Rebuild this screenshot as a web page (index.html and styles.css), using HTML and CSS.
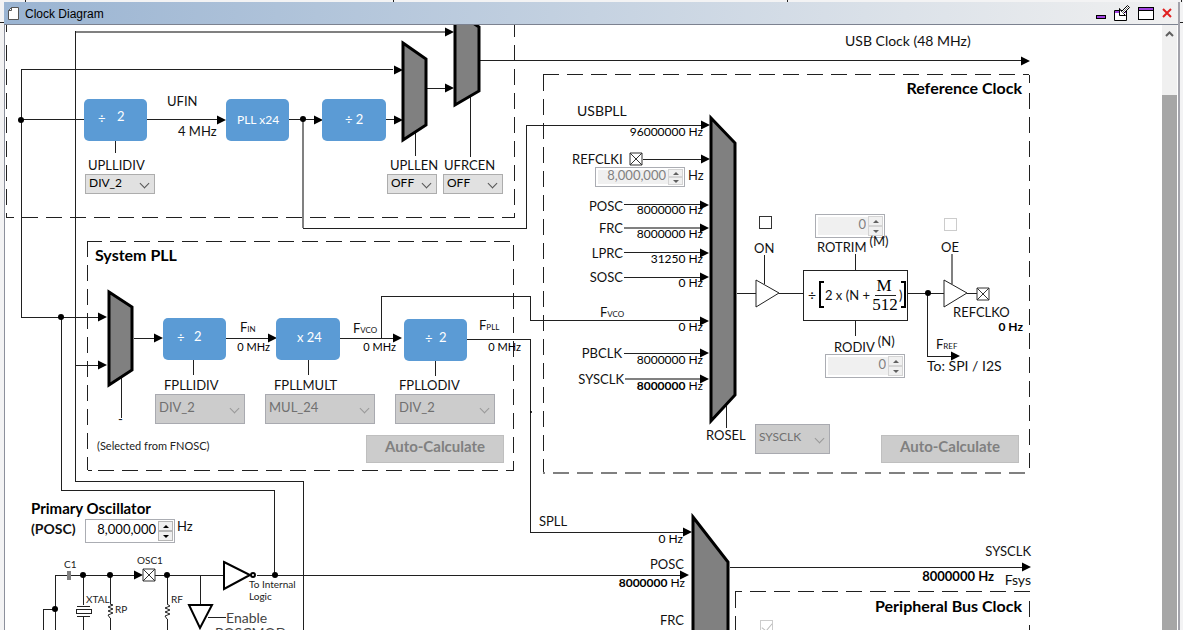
FILE: index.html
```html
<!DOCTYPE html>
<html lang="en">
<head>
    <meta charset="UTF-8">
    <meta name="viewport" content="width=device-width, initial-scale=1.0">
    <title>Clock Diagram</title>
    <link rel="stylesheet" href="styles.css">
</head>
<body>
    <div class="window">
        <header class="titlebar">
            <svg class="doc-icon" width="11" height="13" viewBox="0 0 11 13">
                <path d="M3.500 .5H10.500V12.500H.5V3.500Z" fill="#fff" stroke="#555"/>
                <path d="M3.500 .5V3.500H.5" fill="none" stroke="#555"/>
            </svg>
            <span class="title">Clock Diagram</span>
            <div class="window-buttons">
                <button class="win-btn" aria-label="Minimize">
                    <svg width="10" height="18" viewBox="0 0 10 18"><rect x=".5" y="11.500" width="9" height="3" fill="#a040e0" stroke="#000"/></svg>
                </button>
                <button class="win-btn" aria-label="Float">
                    <svg width="16" height="18" viewBox="0 0 16 18">
                        <path d="M.5 6.500H12.500V16.500H.5Z" fill="#fff" stroke="#000"/>
                        <path d="M1 7H12V9H1Z" fill="#a040e0"/>
                        <path d="M5.500 4.500L7.500 7.500L13.500 1.500L15.500 3.500L9.500 9.500L11.500 11.500H5.500Z" fill="#fff" stroke="#000"/>
                        <path d="M8 9L14 3" stroke="#777"/>
                    </svg>
                </button>
                <button class="win-btn" aria-label="Maximize">
                    <svg width="16" height="18" viewBox="0 0 16 18"><rect x=".5" y="3.500" width="15" height="12" fill="#fff" stroke="#000"/><path d="M1 4H15V6H1Z" fill="#a040e0"/><path d="M1 6.500H15" stroke="#000"/></svg>
                </button>
                <button class="win-btn" aria-label="Close">
                    <svg width="10" height="18" viewBox="0 0 10 18"><path d="M1 5L9 13M9 5L1 13" stroke="#e02020" stroke-width="2"/></svg>
                </button>
            </div>
        </header>

        <main class="content">
            <div class="canvas">
                <svg class="diagram" width="1157" height="605" viewBox="5 25 1157 605">
                    <defs>
                        <marker id="arrow" markerUnits="userSpaceOnUse" markerWidth="10" markerHeight="10" refX="9" refY="5" orient="auto">
                            <path d="M0 0.500L9 5L0 9.500Z"/>
                        </marker>
                    </defs>

                    <!-- group frames -->
                    <g class="frame">
                        <path d="M6 25V32M6 45V217" stroke-dasharray="16 8"/>
                        <path d="M6 217H14M22 217H515" stroke-dasharray="16 8"/>
                        <path d="M514 21V217" stroke-dasharray="16 8"/>
                        <path d="M88 241H102M110 241H514" stroke-dasharray="16 8"/>
                        <path d="M87 241V470" stroke-dasharray="16 8"/>
                        <path d="M513 245V470" stroke-dasharray="16 8"/>
                        <path d="M88 470H92M98 470H514" stroke-dasharray="16 8"/>
                        <path d="M543 74H1029" stroke-dasharray="16 8"/>
                        <path d="M543 75V472" stroke-dasharray="16 8"/>
                        <path d="M1029 75V83M1029 93V468" stroke-dasharray="16 8"/>
                        <path class="soft" d="M543 473H545M553 473H1028" stroke-dasharray="16 8"/>
                        <path d="M735 591H742M750 591H1030" stroke-dasharray="16 8"/>
                        <path d="M735 592V630" stroke-dasharray="16 8"/>
                        <path d="M1029 601V630" stroke-dasharray="16 8"/>
                    </g>

                    <!-- wires -->
                    <g class="wire">
                        <path class="soft" d="M76 32H446"/>
                        <path d="M75 31V481H303V630"/>
                        <path d="M21 317V69H393"/>
                        <path d="M21 119H84M147 119H218M289 119H316M386 119H396"/>
                        <path d="M115 141V153M415 133V156M470 97V157"/>
                        <path d="M427 88H446M480 60H1022"/>
                        <path class="soft" d="M303 120V228"/>
                        <path d="M303 228H526V125H702M643 159H702"/>
                        <path d="M624 204H702M624 252H702M624 277H702M624 353H702"/>
                        <path class="soft" d="M624 228H702M625 379H702"/>
                        <path d="M381 338V296H530V320H702"/>
                        <path d="M21 317H98M75 365H98"/>
                        <path d="M61 317V490H274V575"/>
                        <path d="M121 377V418M193 360V375M308 359V375M435 361V376"/>
                        <path d="M134 338H154M226 338H268M340 338H395"/>
                        <path d="M467 339H530V532H684"/>
                        <path d="M726 406V428M737 293H756M779 293H804M907 293H944M967 293H977"/>
                        <path d="M764 255V284M855 254V271M855 320V336"/>
                        <path class="soft" d="M952 254V284"/>
                        <path d="M927 293V356H952"/>
                        <path d="M257 575H682M730 567H1022"/>
                        <path d="M43 630V609H55M55 630V575H67M71 575H135M155 575H224"/>
                        <path d="M83 575V605M83 617V630M110 575V604M110 618V630M167 575V604M167 619V630M200 575V605M208 617H226"/>
                    </g>
                    <g class="heads">
                        <path d="M440 32H454"/><path d="M390 70H403"/><path d="M390 120H403"/><path d="M210 120H226"/>
                        <path d="M312 120H323"/><path d="M440 88H454"/><path d="M1010 61H1030"/>
                        <path d="M700 125H710"/><path d="M700 159H710"/><path d="M698 205H709"/><path d="M698 228H709"/>
                        <path d="M698 253H709"/><path d="M698 277H709"/><path d="M698 321H709"/><path d="M698 353H709"/><path d="M698 379H709"/>
                        <path d="M96 317H107"/><path d="M96 365H107"/><path d="M150 338H163"/><path d="M266 338H277"/><path d="M390 338H402"/>
                        <path d="M680 532H692"/><path d="M948 356H960"/><path d="M678 575H689"/><path d="M1010 567H1031"/><path d="M130 575H143"/>
                    </g>

                    <g class="dots">
                        <circle cx="21" cy="120" r="3"/><circle cx="303" cy="119" r="3"/><circle cx="61" cy="317" r="3"/>
                        <circle cx="928" cy="293" r="3"/><circle cx="275" cy="575" r="3"/><circle cx="83" cy="575" r="3"/>
                        <circle cx="110" cy="575" r="3"/><circle cx="167" cy="575" r="3"/><circle cx="55" cy="609" r="3"/>
                        <circle cx="531" cy="412" r="1"/>
                    </g>

                    <!-- multiplexers -->
                    <g class="mux">
                        <path d="M403 43L426 59V125L403 140Z"/>
                        <path d="M455 11L479 27V91L455 105Z"/>
                        <path d="M109 292L132 307V370L109 385Z"/>
                        <path d="M711 118L735 143V395L711 421Z"/>
                        <path d="M693 517L728 562V640H693Z"/>
                    </g>

                    <!-- dividers and multipliers -->
                    <g class="block">
                        <rect x="84" y="99" width="63" height="42" rx="5"/>
                        <rect x="226" y="99" width="63" height="42" rx="5"/>
                        <rect x="322" y="99" width="64" height="42" rx="5"/>
                        <rect x="163" y="318" width="63" height="42" rx="5"/>
                        <rect x="276" y="318" width="64" height="42" rx="5"/>
                        <rect x="404" y="319" width="63" height="42" rx="5"/>
                    </g>
                    <g class="block-text">
                        <text x="98" y="123">÷</text><text x="117" y="121">2</text>
                        <text x="237" y="124" class="small">PLL x24</text>
                        <text x="345" y="124">÷ 2</text>
                        <text x="177" y="342">÷</text><text x="194" y="341">2</text>
                        <text x="297" y="342">x 24</text>
                        <text x="425" y="343">÷</text><text x="439" y="342">2</text>
                    </g>

                    <!-- buffers, pads and the divider formula -->
                    <g class="part">
                        <path d="M756 280L779 293L756 307Z"/>
                        <path d="M944 280L967 293L944 307Z"/>
                        <path class="pad" d="M630 153H642V165H630ZL642 165M642 153L630 165"/>
                        <path class="pad" d="M977 288H989V300H977ZL989 300M989 288L977 300"/>
                        <path class="pad" d="M143 569H155V581H143ZL155 581M155 569L143 581"/>
                        <rect x="803" y="270" width="104" height="50" class="crisp"/>
                        <path class="bracket" d="M824 282H820V307H824M901 282H905V307H901"/>
                        <path class="crisp" d="M875 295H896"/>
                    </g>
                    <text x="808" y="300" class="label large">÷</text>
                    <text x="825" y="300" class="label">2 x (N +</text>
                    <text x="884" y="291" class="math">M</text>
                    <text x="885" y="310" class="math">512</text>
                    <text x="899" y="300" class="label">)</text>

                    <!-- oscillator parts -->
                    <g class="part">
                        <path class="cap" d="M68 571V580M70 571V580"/>
                        <path class="bold" d="M224 562L250 575L224 589Z"/>
                        <circle class="bold" cx="253" cy="575" r="2"/>
                        <path class="bold" d="M189 605H212L200 628Z"/>
                        <path class="crisp" d="M77 606H90M77 616H90M76 609H91V613H76Z"/>
                        <path d="M110 604L113 605L108 607L113 609L108 611L113 613L108 615L110 618"/>
                        <path d="M167 604L170 606L165 608L170 610L165 612L170 614L165 616L167 619"/>
                    </g>

                    <g class="label">
                        <text x="845" y="46" class="large">USB Clock (48 MHz)</text>
                        <text x="167" y="106">UFIN</text>
                        <text x="178" y="136">4 MHz</text>
                        <text x="577" y="116" class="large">USBPLL</text>
                        <text x="688" y="180">Hz</text>
                        <text x="927" y="371" class="large">To: SPI / I2S</text>
                        <text x="953" y="317">REFCLKO</text>
                        <text x="539" y="526">SPLL</text>
                        <text x="177" y="531">Hz</text>
                        <text x="118" y="424">-</text>
                        <text x="226" y="623" class="enable">Enable</text>
                        <text x="215" y="638" class="enable">POSCMOD</text>
                        <text x="600" y="317">F<tspan class="sub">VCO</tspan></text>
                        <text x="240" y="332">F<tspan class="sub">IN</tspan></text>
                        <text x="353" y="333">F<tspan class="sub">VCO</tspan></text>
                        <text x="479" y="330">F<tspan class="sub">PLL</tspan></text>
                        <text x="936" y="349">F<tspan class="sub">REF</tspan></text>
                    </g>
                    <g class="label end">
                        <text x="623" y="211">POSC</text>
                        <text x="623" y="233">FRC</text>
                        <text x="623" y="258">LPRC</text>
                        <text x="623" y="282">SOSC</text>
                        <text x="622" y="358">PBCLK</text>
                        <text x="624" y="384">SYSCLK</text>
                        <text x="684" y="569">POSC</text>
                        <text x="684" y="625">FRC</text>
                        <text x="1031" y="556">SYSCLK</text>
                        <text x="1031" y="585" class="large">Fsys</text>
                    </g>
                    <g class="value end">
                        <text x="703" y="136">96000000 Hz</text>
                        <text x="703" y="214">8000000 Hz</text>
                        <text x="703" y="238">8000000 Hz</text>
                        <text x="703" y="263">31250 Hz</text>
                        <text x="703" y="287">0 Hz</text>
                        <text x="703" y="331">0 Hz</text>
                        <text x="703" y="364">8000000 Hz</text>
                        <text x="703" y="390"><tspan class="strong">8000000</tspan> Hz</text>
                        <text x="683" y="543">0 Hz</text>
                        <text x="685" y="587"><tspan class="strong">8000000</tspan> Hz</text>
                        <text x="994" y="581" class="strong total">8000000 Hz</text>
                        <text x="1023" y="331" class="strong">0 Hz</text>
                        <text x="270" y="351" class="mhz">0 MHz</text>
                        <text x="396" y="351" class="mhz">0 MHz</text>
                        <text x="521" y="351" class="mhz">0 MHz</text>
                    </g>
                    <g class="heading">
                        <text x="1022" y="94" class="end">Reference Clock</text>
                        <text x="1022" y="612" class="end">Peripheral Bus Clock</text>
                        <text x="95" y="261">System PLL</text>
                        <text x="31" y="514" class="osc">Primary Oscillator</text>
                    </g>
                    <g class="tiny">
                        <text x="64" y="568">C1</text>
                        <text x="137" y="564">OSC1</text>
                        <text x="86" y="603">XTAL</text>
                        <text x="115" y="613">RP</text>
                        <text x="171" y="603">RF</text>
                        <text x="249" y="588">To Internal</text>
                        <text x="249" y="600">Logic</text>
                        <text x="97" y="450" class="note">(Selected from FNOSC)</text>
                    </g>
                </svg>

                <!-- USB PLL -->
                <div class="field upllidiv">
                    <label for="upllidiv">UPLLIDIV</label>
                    <span class="select"><select id="upllidiv"><option>DIV_2</option></select></span>
                </div>
                <div class="field upllen">
                    <label for="upllen">UPLLEN</label>
                    <span class="select"><select id="upllen"><option>OFF</option></select></span>
                </div>
                <div class="field ufrcen">
                    <label for="ufrcen">UFRCEN</label>
                    <span class="select"><select id="ufrcen"><option>OFF</option></select></span>
                </div>

                <!-- System PLL -->
                <div class="field tall fpllidiv">
                    <label for="fpllidiv">FPLLIDIV</label>
                    <span class="select"><select id="fpllidiv" disabled><option>DIV_2</option></select></span>
                </div>
                <div class="field tall fpllmult">
                    <label for="fpllmult">FPLLMULT</label>
                    <span class="select"><select id="fpllmult" disabled><option>MUL_24</option></select></span>
                </div>
                <div class="field tall fpllodiv">
                    <label for="fpllodiv">FPLLODIV</label>
                    <span class="select"><select id="fpllodiv" disabled><option>DIV_2</option></select></span>
                </div>
                <button class="calc calc-pll" disabled>Auto-Calculate</button>

                <!-- Reference clock -->
                <label class="node refclki-label" for="refclki">REFCLKI</label>
                <span class="spinner off refclki">
                    <input id="refclki" type="text" value="8,000,000" disabled>
                    <span class="steps"><button aria-label="Increase" disabled></button><button aria-label="Decrease" disabled></button></span>
                </span>
                <input class="node check on" id="on" type="checkbox">
                <label class="node on-label" for="on">ON</label>
                <input class="node check oe" id="oe" type="checkbox" disabled>
                <label class="node oe-label" for="oe">OE</label>
                <span class="spinner off rotrim">
                    <input id="rotrim" type="text" value="0" disabled>
                    <span class="steps"><button aria-label="Increase" disabled></button><button aria-label="Decrease" disabled></button></span>
                </span>
                <label class="node rotrim-label" for="rotrim">ROTRIM<sup>(M)</sup></label>
                <label class="node rodiv-label" for="rodiv">RODIV<sup>(N)</sup></label>
                <span class="spinner off rodiv">
                    <input id="rodiv" type="text" value="0" disabled>
                    <span class="steps"><button aria-label="Increase" disabled></button><button aria-label="Decrease" disabled></button></span>
                </span>
                <label class="node rosel-label" for="rosel">ROSEL</label>
                <div class="field tall rosel">
                    <span class="select"><select id="rosel" disabled><option>SYSCLK</option></select></span>
                </div>
                <button class="calc calc-ref" disabled>Auto-Calculate</button>

                <!-- Primary oscillator -->
                <label class="node posc-label" for="posc">(POSC)</label>
                <span class="spinner posc">
                    <input id="posc" type="text" value="8,000,000">
                    <span class="steps"><button aria-label="Increase"></button><button aria-label="Decrease"></button></span>
                </span>

                <!-- Peripheral bus clock -->
                <input class="node check pbclk" type="checkbox" aria-label="Peripheral bus clock" checked disabled>
            </div>

            <div class="scrollbar">
                <svg width="15" height="20" viewBox="0 0 15 20"><path d="M4 11L7.500 7.500L11 11" fill="none" stroke="#606060" stroke-width="2"/></svg>
                <div class="thumb"></div>
            </div>
        </main>
    </div>
</body>
</html>
```

FILE: styles.css
```css
* {
    box-sizing: border-box;
}
/* grid lines of the desktop show around the window */
body {
    margin: 0;
    padding: 2px 3px 0 4px;
    height: 100vh;
    display: flex;
    background:
        linear-gradient(#222, #222) 0 22px / 100% 1px no-repeat,
        repeating-linear-gradient(90deg, transparent 0 393px, #222 393px 394px) 0 0 / 100% 2px no-repeat,
        linear-gradient(#222, #222) 25px 0 / 1px 2px no-repeat,
        #f3f3f4;
    font-family: Lato, "Liberation Sans", sans-serif;
    font-size: 13px;
    color: #111;
    overflow: hidden;
}
.window {
    flex: 1;
    min-width: 0;
    display: flex;
    flex-direction: column;
    border-right: 2px solid #a3a3ab;
}
.titlebar {
    flex: none;
    height: 23px;
    display: flex;
    align-items: center;
    padding: 0 6px 0 4px;
    background: linear-gradient(90deg, #9ab4d2, #f0f0f0);
    border-bottom: 1px solid #7c8290;
}
.title {
    margin-left: 6px;
    padding-top: 1px;
    font-family: "Liberation Sans", sans-serif;
    font-size: 12px;
    color: #000;
}
.window-buttons {
    margin-left: auto;
    display: flex;
    gap: 8px;
}
.win-btn {
    padding: 0;
    border: none;
    background: none;
    display: flex;
}
.content {
    flex: 1;
    min-height: 0;
    display: flex;
    background: #fff;
    border-left: 1px solid #8c909c;
    padding-right: 1px;
}
.canvas {
    flex: 1;
    position: relative;
    overflow: hidden;
}
.diagram {
    display: block;
}
.scrollbar {
    flex: none;
    width: 15px;
    display: flex;
    flex-direction: column;
    background: #f0f0f0;
}
.thumb {
    flex: 1;
    margin-top: 50px;
    background: #a6a6a6;
}

/* drawing */
.frame path,
.wire path {
    fill: none;
    stroke: #202020;
    shape-rendering: crispEdges;
}
.frame .soft,
.wire .soft {
    stroke: #808080;
    stroke-width: 2;
}
.heads path {
    fill: none;
    stroke: none;
    marker-end: url(#arrow);
}
.mux path {
    fill: #808080;
    stroke: #000;
    stroke-width: 3;
}
.block {
    fill: #5b9bd5;
}
.block-text {
    fill: #fff;
    font-size: 13px;
}
.block-text .small {
    font-size: 12px;
}
.part {
    fill: #fff;
    stroke: #222;
}
.part .crisp {
    shape-rendering: crispEdges;
}
.part .pad {
    stroke: #333;
}
.part .bracket {
    fill: none;
    stroke: #000;
    stroke-width: 2;
}
.part .bold {
    stroke: #000;
    stroke-width: 2;
}
.part .cap {
    stroke: #808080;
    stroke-width: 2;
}
.label {
    font-size: 13px;
    fill: #111;
}
.large {
    font-size: 14px;
}
.label .sub {
    font-size: 8px;
}
.label .enable {
    font-size: 14px;
    fill: #444;
}
.value {
    font-size: 12px;
    fill: #000;
}
.value .mhz {
    font-size: 11px;
}
.value .total {
    font-size: 13px;
}
.strong {
    font-weight: bold;
}
.end {
    text-anchor: end;
}
.heading {
    font-size: 16px;
    font-weight: bold;
    fill: #000;
}
.heading .osc {
    font-size: 15px;
}
.math {
    font-family: "Liberation Serif", serif;
    font-size: 17px;
    text-anchor: middle;
}
.tiny {
    font-size: 10px;
    fill: #222;
}
.tiny .note {
    font-size: 11px;
}

/* controls placed on the drawing */
.node,
.field,
.spinner,
.calc {
    position: absolute;
    margin: 0;
}
label {
    line-height: 16px;
    white-space: nowrap;
}
label sup {
    margin-left: 3px;
    font-size: 13px;
    line-height: 0;
    vertical-align: 6px;
}
.field {
    display: flex;
    flex-direction: column;
    gap: 1px;
}
.field label {
    padding-left: 3px;
}
.tall label {
    padding-left: 9px;
}
.select {
    position: relative;
    display: flex;
}
.select::after {
    content: "";
    position: absolute;
    right: 7px;
    top: 6px;
    width: 6px;
    height: 6px;
    border: solid #555;
    border-width: 0 1px 1px 0;
    transform: rotate(45deg);
    pointer-events: none;
}
select {
    appearance: none;
    width: 100%;
    height: 20px;
    margin: 0;
    padding: 0 0 4px 3px;
    border: 1px solid #adadad;
    border-radius: 0;
    background: #e1e1e1;
    color: #000;
    font-family: inherit;
    font-size: 12px;
}
.tall select {
    height: 30px;
    padding-bottom: 5px;
    border-color: #a9aab0;
    background: #ccc;
    color: #707070;
    opacity: 1;
    font-size: 13px;
}
.tall .select::after {
    top: 11px;
    border-color: #999;
}
.calc {
    width: 138px;
    height: 28px;
    padding: 0 0 6px;
    border: 1px solid #bfbfbf;
    background: #ccc;
    color: #808080;
    font-family: inherit;
    font-size: 15px;
    font-weight: bold;
}
.spinner {
    display: flex;
    height: 24px;
    padding: 1px;
    border: 1px solid #abadb3;
    background: #fff;
}
.spinner input {
    flex: 1;
    min-width: 0;
    padding: 0 2px 4px 0;
    border: none;
    background: #fff;
    color: #000;
    text-align: right;
    font-family: inherit;
    font-size: 13px;
}
.spinner.off input {
    margin: 1px 0 1px 1px;
    background: #f0f0f0;
    color: #808080;
}
.steps {
    width: 15px;
    display: flex;
    flex-direction: column;
}
.steps button {
    flex: 1;
    min-height: 0;
    display: flex;
    align-items: center;
    justify-content: center;
    padding: 0;
    border: 1px solid #b5b5b5;
    background: #f0f0f0;
    color: #000;
}
.steps button::after {
    content: "";
    border: 3px solid transparent;
    border-top: none;
    border-bottom: 3px solid currentColor;
}
.steps button:last-child::after {
    border-bottom: none;
    border-top: 3px solid currentColor;
}
.off .steps button {
    border-color: #d4d4d4;
    color: #606060;
}
.check {
    appearance: none;
    width: 13px;
    height: 13px;
    border: 1px solid #333;
    background: #fff;
}
.check:disabled {
    border-color: #ccc;
}
.check:checked::after {
    content: "";
    position: absolute;
    left: 3px;
    top: 0;
    width: 5px;
    height: 9px;
    border: solid #bbb;
    border-width: 0 1px 1px 0;
    transform: rotate(40deg);
}

.upllidiv { left: 80px; top: 132px; width: 70px; }
.upllen { left: 382px; top: 132px; width: 50px; }
.ufrcen { left: 438px; top: 132px; width: 60px; }
.ufrcen label { padding-left: 1px; }
.fpllidiv { left: 150px; top: 352px; width: 90px; }
.fpllmult { left: 260px; top: 352px; width: 110px; }
.fpllodiv { left: 390px; top: 352px; width: 100px; }
.fpllodiv label { padding-left: 4px; }
.calc-pll { left: 361px; top: 410px; }
.refclki-label { left: 567px; top: 126px; }
.refclki { left: 590px; top: 142px; width: 90px; height: 20px; }
.on { left: 754px; top: 191px; }
.on-label { left: 749px; top: 215px; }
.oe { left: 939px; top: 193px; }
.oe-label { left: 936px; top: 214px; }
.rotrim { left: 810px; top: 189px; width: 70px; }
.rotrim-label { left: 812px; top: 214px; }
.rodiv-label { left: 829px; top: 314px; }
.rodiv { left: 820px; top: 329px; width: 80px; }
.rosel-label { left: 701px; top: 402px; }
.rosel { left: 750px; top: 399px; width: 75px; }
.rosel select { font-size: 12px; }
.calc-ref { left: 876px; top: 410px; }
.posc-label { left: 26px; top: 496px; font-size: 14px; font-weight: bold; }
.posc { left: 80px; top: 494px; width: 90px; }
.pbclk { left: 755px; top: 595px; }
```
